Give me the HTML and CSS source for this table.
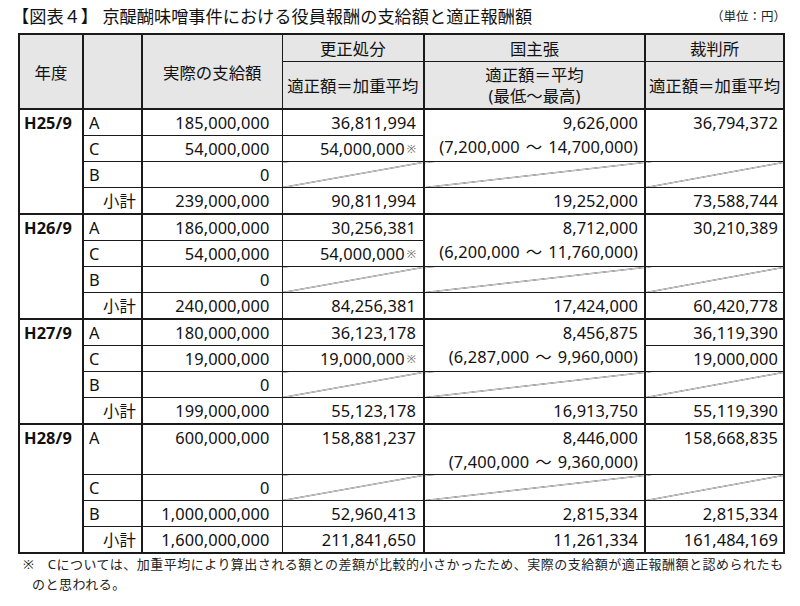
FILE: index.html
```html
<!DOCTYPE html>
<html lang="ja">
<head>
<meta charset="utf-8">
<title>図表４</title>
<link rel="stylesheet" href="styles.css">
</head>
<body>
<div class="page">
  <div class="titlebar">
    <h1 class="title">【図表４】 京醍醐味噌事件における役員報酬の支給額と適正報酬額</h1>
    <span class="unit">（単位：円）</span>
  </div>
  <table class="tbl">
    <colgroup>
      <col class="c1"><col class="c2"><col class="c3"><col class="c4"><col class="c5"><col class="c6">
    </colgroup>
    <thead>
      <tr class="hr1">
        <th rowspan="2">年度</th>
        <th rowspan="2"></th>
        <th rowspan="2">実際の支給額</th>
        <th>更正処分</th>
        <th>国主張</th>
        <th>裁判所</th>
      </tr>
      <tr class="hr2">
        <th>適正額＝加重平均</th>
        <th class="two"><span class="hl">適正額＝平均</span><span class="hl paren">(最低～最高)</span></th>
        <th>適正額＝加重平均</th>
      </tr>
    </thead>
    <tbody class="grp">
      <tr>
        <td rowspan="4" class="yr">H25/9</td>
        <td class="lbl">A</td>
        <td class="n3">185,000,000</td>
        <td class="n4">36,811,994</td>
        <td rowspan="2" class="n5">9,626,000<br>(7,200,000<span class="tl">～</span>14,700,000)</td>
        <td rowspan="2" class="n6">36,794,372</td>
      </tr>
      <tr>
        <td class="lbl">C</td>
        <td class="n3">54,000,000</td>
        <td class="n4">54,000,000<span class="mark">※</span></td>
      </tr>
      <tr>
        <td class="lbl">B</td>
        <td class="n3">0</td>
        <td class="diag"></td>
        <td class="diag"></td>
        <td class="diag"></td>
      </tr>
      <tr>
        <td class="sub">小計</td>
        <td class="n3">239,000,000</td>
        <td class="n4">90,811,994</td>
        <td class="n5">19,252,000</td>
        <td class="n6">73,588,744</td>
      </tr>
    </tbody>
    <tbody class="grp">
      <tr>
        <td rowspan="4" class="yr">H26/9</td>
        <td class="lbl">A</td>
        <td class="n3">186,000,000</td>
        <td class="n4">30,256,381</td>
        <td rowspan="2" class="n5">8,712,000<br>(6,200,000<span class="tl">～</span>11,760,000)</td>
        <td rowspan="2" class="n6">30,210,389</td>
      </tr>
      <tr>
        <td class="lbl">C</td>
        <td class="n3">54,000,000</td>
        <td class="n4">54,000,000<span class="mark">※</span></td>
      </tr>
      <tr>
        <td class="lbl">B</td>
        <td class="n3">0</td>
        <td class="diag"></td>
        <td class="diag"></td>
        <td class="diag"></td>
      </tr>
      <tr>
        <td class="sub">小計</td>
        <td class="n3">240,000,000</td>
        <td class="n4">84,256,381</td>
        <td class="n5">17,424,000</td>
        <td class="n6">60,420,778</td>
      </tr>
    </tbody>
    <tbody class="grp">
      <tr>
        <td rowspan="4" class="yr">H27/9</td>
        <td class="lbl">A</td>
        <td class="n3">180,000,000</td>
        <td class="n4">36,123,178</td>
        <td rowspan="2" class="n5">8,456,875<br>(6,287,000<span class="tl">～</span>9,960,000)</td>
        <td class="n6">36,119,390</td>
      </tr>
      <tr>
        <td class="lbl">C</td>
        <td class="n3">19,000,000</td>
        <td class="n4">19,000,000<span class="mark">※</span></td>
        <td class="n6">19,000,000</td>
      </tr>
      <tr>
        <td class="lbl">B</td>
        <td class="n3">0</td>
        <td class="diag"></td>
        <td class="diag"></td>
        <td class="diag"></td>
      </tr>
      <tr>
        <td class="sub">小計</td>
        <td class="n3">199,000,000</td>
        <td class="n4">55,123,178</td>
        <td class="n5">16,913,750</td>
        <td class="n6">55,119,390</td>
      </tr>
    </tbody>
    <tbody class="grp">
      <tr>
        <td rowspan="4" class="yr">H28/9</td>
        <td class="lbl">A</td>
        <td class="n3">600,000,000</td>
        <td class="n4">158,881,237</td>
        <td class="n5">8,446,000<br>(7,400,000<span class="tl">～</span>9,360,000)</td>
        <td class="n6">158,668,835</td>
      </tr>
      <tr>
        <td class="lbl">C</td>
        <td class="n3">0</td>
        <td class="diag"></td>
        <td class="diag"></td>
        <td class="diag"></td>
      </tr>
      <tr>
        <td class="lbl">B</td>
        <td class="n3">1,000,000,000</td>
        <td class="n4">52,960,413</td>
        <td class="n5">2,815,334</td>
        <td class="n6">2,815,334</td>
      </tr>
      <tr>
        <td class="sub">小計</td>
        <td class="n3">1,600,000,000</td>
        <td class="n4">211,841,650</td>
        <td class="n5">11,261,334</td>
        <td class="n6">161,484,169</td>
      </tr>
    </tbody>
  </table>
  <p class="note">※　Cについては、加重平均により算出される額との差額が比較的小さかったため、実際の支給額が適正報酬額と認められたも<br>のと思われる。</p>
</div>
</body>
</html>
```

FILE: styles.css
```css
html, body {
  margin: 0;
  padding: 0;
  background: #ffffff;
}

.page {
  width: 800px;
  height: 606px;
  box-sizing: border-box;
  padding: 6px 0 0 18px;
  font-family: "Noto Sans", "Noto Sans CJK JP", sans-serif;
  color: #111111;
  overflow: hidden;
}

.titlebar {
  display: flex;
  justify-content: space-between;
  align-items: center;
  margin: 0 14px 5px -6px;
  height: 22px;
}

.title {
  margin: 0;
  font-size: 17.2px;
  font-weight: 400;
  line-height: 22px;
  white-space: nowrap;
}

.unit {
  font-size: 12.5px;
  line-height: 22px;
  color: #222222;
}

.tbl {
  width: 765px;
  border-collapse: collapse;
  table-layout: fixed;
  border: 2px solid #1a1a1a;
  font-size: 16.4px;
}

.c1 { width: 64px; border-right: 2px solid #1a1a1a; }
.c2 { width: 59px; border-right: 2px solid #1a1a1a; }
.c3 { width: 140px; border-right: 1px solid #1a1a1a; }
.c4 { width: 142px; border-right: 2px solid #1a1a1a; }
.c5 { width: 221px; border-right: 2px solid #1a1a1a; }
.c6 { width: 139px; }

.tbl th {
  background: #e6e6e6;
  font-weight: 400;
  line-height: 21px;
  padding: 2px 0;
  border: 1px solid #1a1a1a;
  text-align: center;
  vertical-align: middle;
  white-space: nowrap;
}

.hr1 th {
  padding: 3px 0 2px;
}

.tbl thead {
  border-bottom: 2px solid #1a1a1a;
}

.hl {
  display: block;
  line-height: 21px;
}

.paren {
  font-feature-settings: "palt";
}

.tbl td {
  border: 1px solid #1a1a1a;
  line-height: 24px;
  padding: 1px 0 0 0;
  vertical-align: top;
  white-space: nowrap;
  letter-spacing: 0.1px;
}

.grp {
  border-top: 2px solid #1a1a1a;
}

.yr {
  font-weight: 700;
  padding-left: 4px !important;
}

.lbl {
  padding-left: 5px !important;
}

.sub {
  text-align: right;
  padding-right: 5px !important;
}

.n3 { text-align: right; padding-right: 12px !important; }
.n4 { text-align: right; padding-right: 7px !important; }
.n5 { text-align: right; padding-right: 6px !important; }
.n6 { text-align: right; padding-right: 5px !important; }

.tl {
  margin: 0 6px;
}

.mark {
  font-size: 11px;
  color: #666666;
  margin-left: 2px;
  vertical-align: 2px;
}

.diag {
  background: linear-gradient(to bottom right,
    transparent calc(50% - 0.7px),
    #444444 50%,
    transparent calc(50% + 0.7px));
}

.note {
  margin: 0 0 0 5px;
  padding-left: 9px;
  text-indent: -9px;
  font-size: 13px;
  letter-spacing: 0.48px;
  line-height: 20px;
  color: #222222;
  white-space: nowrap;
}
```
